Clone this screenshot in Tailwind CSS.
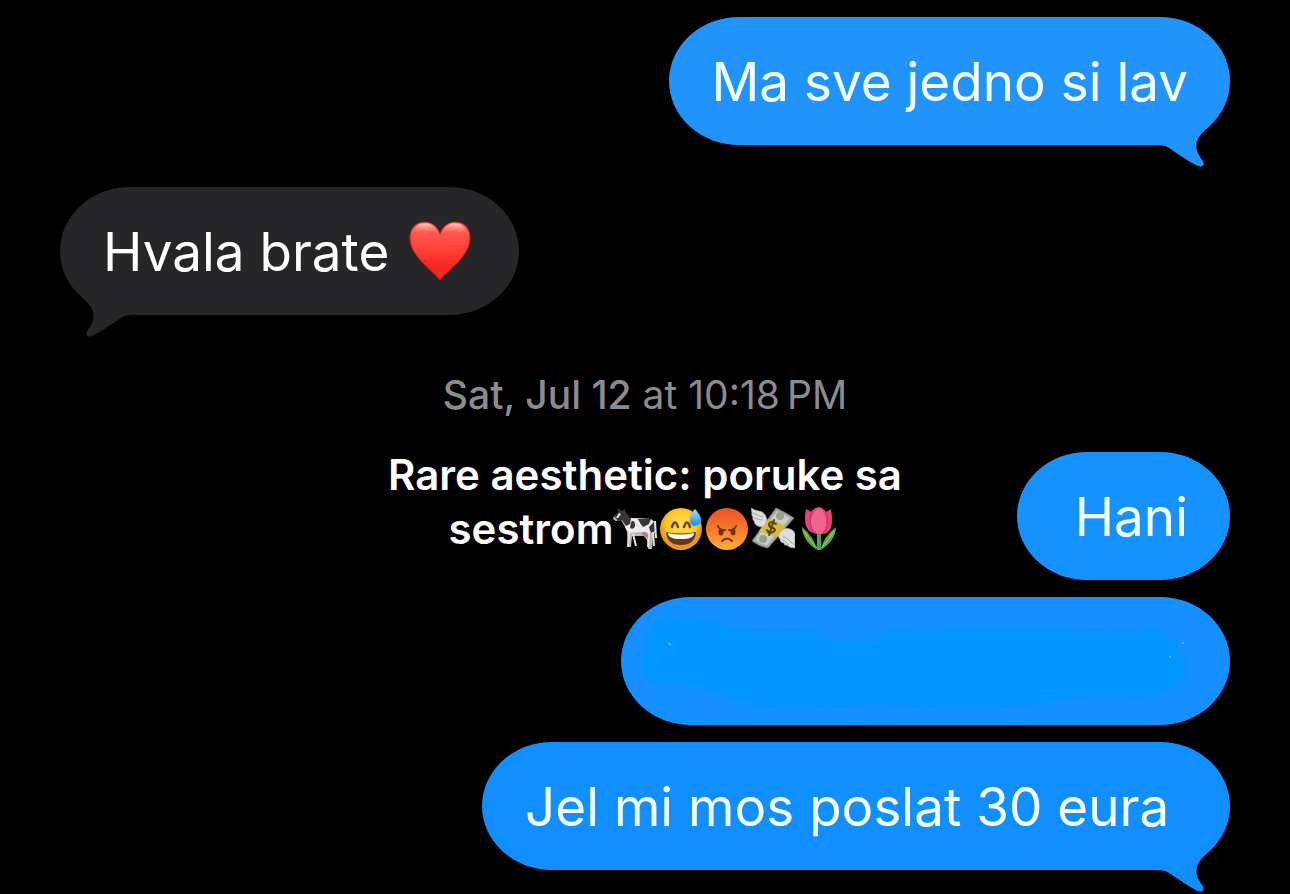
<!DOCTYPE html>
<html lang="hr">
<head>
<meta charset="utf-8">
<meta name="viewport" content="width=device-width, initial-scale=1">
<title>Poruke</title>
<script src="https://cdn.jsdelivr.net/npm/@tailwindcss/browser@4"></script>
</head>
<body class="bg-black font-[Inter,sans-serif] text-white">
<main class="flex min-h-screen flex-col overflow-hidden px-[60px] pt-[17px] pb-6">

  <div class="relative flex h-32 min-w-[558px] items-center self-end rounded-[70px/64px] bg-[#2094fa] px-[42px] pt-[3px] text-[53px] leading-none text-[#f4ffff]">
    <p class="whitespace-nowrap">Ma sve jedno si lav</p>
    <svg class="absolute right-0 -bottom-6 h-12 w-20" viewBox="0 0 80 48" aria-hidden="true"><path fill="#2094fa" d="M4 12V24C14 24 17 25 22 29C34 37 42 43 50 45.500C54 46 54.500 43 52.500 39.500C48 33 45 28 47 21C48 16 52 12 56 8L63 0H4Z"/></svg>
  </div>

  <div class="relative mt-[42px] flex h-32 min-w-[459px] items-center gap-5 self-start rounded-[70px/64px] bg-[#262628] pr-12 pl-[43px] text-[53px] leading-none">
    <p class="pt-[3px] whitespace-nowrap">Hvala brate</p>
    <svg class="h-[62px] w-[62px] shrink-0" viewBox="0 0 62 62" role="img" aria-label="❤️">
      <defs>
        <linearGradient id="heart" x1="0" y1="0" x2="0" y2="1"><stop offset="0" stop-color="#ff665e"/><stop offset=".35" stop-color="#ff4b43"/><stop offset=".75" stop-color="#f6291f"/><stop offset="1" stop-color="#e92a20"/></linearGradient>
        <linearGradient id="shine" x1="0" y1="0" x2="0" y2="1"><stop offset="0" stop-color="#ffd8d4"/><stop offset="1" stop-color="#ff665e" stop-opacity="0"/></linearGradient>
      </defs>
      <path fill="url(#heart)" stroke="#d61b18" d="M31 60C26 52 1 37 1 18C1 8 7 2 16 2C24 2 29 8 31 14C33 8 38 2 46 2C55 2 61 8 61 18C61 37 36 52 31 60Z"/>
      <path fill="url(#shine)" d="M4 15C5 7 10 3 16 3C23 3 27 8 29 14C24 10 10 10 4 15ZM33 14C35 8 39 3 46 3C52 3 57 7 58 15C52 10 38 10 33 14Z"/>
    </svg>
    <svg class="absolute -bottom-6 left-0 h-12 w-20 -scale-x-100" viewBox="0 0 80 48" aria-hidden="true"><path fill="#262628" d="M4 12V24C14 24 17 25 22 29C34 37 42 43 50 45.500C54 46 54.500 43 52.500 39.500C48 33 45 28 47 21C48 16 52 12 56 8L63 0H4Z"/></svg>
  </div>

  <p class="mt-[55px] text-center text-[39px] leading-[50px] whitespace-nowrap text-[#8b8b90]"><time datetime="22:18"><span class="font-medium">Sat, Jul 12</span> at 10:18&#8201;PM</time></p>

  <div class="mt-8 grid grid-cols-[1fr_auto_1fr] items-start">
    <div class="col-start-2 -mt-1 text-center text-[42px] leading-[54px] font-semibold whitespace-nowrap">
      <p>Rare aesthetic: poruke sa</p>
      <p class="flex h-[54px] items-center justify-center">sestrom<span class="flex gap-[2px]">
        <svg class="size-11" viewBox="0 0 44 44" role="img" aria-label="🐄">
          <path fill="#bdb9b8" d="M4 8L1 9L0 12L3 14L8 13L12 20L14 25L15 40H18L19 29L31 29L34 33L35 42H39L40 29L43 23L42 15L38 12L17 11L12 5Z"/>
          <path fill="#eeeae9" d="M12 9L17 11L38 12L40 15L37 27L26 25L16 26L12 20Z"/>
          <path fill="#373538" d="M1 9L5 5L4 1L9 4L12 2L13 6L18 11L17 17L13 19L9 13L5 14ZM18 15Q22 12 22 19Q21 23 17 21ZM25 12H38L36 17L30 20L27 16ZM36 20L41 15L42 24L38 26Z"/>
          <path stroke="#e5e1df" stroke-width="2" fill="none" d="M16 26L15 40M20 27L23 39M36 26L35 40M40 25L41 39M42 14L43 31"/>
          <path fill="#c97a79" d="M28 26Q32 23 35 27V31L31 29Z"/><path fill="#eee" d="M6 6L8 7L5 11H3Z"/>
        </svg>
        <svg class="size-11" viewBox="0 0 44 44" role="img" aria-label="😅">
          <defs><radialGradient id="smile" cy=".4"><stop stop-color="#ffe14c"/><stop offset=".7" stop-color="#fdc72f"/><stop offset="1" stop-color="#e99720"/></radialGradient><linearGradient id="drop" x1="0" y1="0" x2="0" y2="1"><stop stop-color="#a9e6ff"/><stop offset="1" stop-color="#168bda"/></linearGradient></defs>
          <circle cx="22" cy="22" r="21" fill="url(#smile)"/>
          <path fill="none" stroke="#754116" stroke-width="2.500" stroke-linecap="round" d="M13 20Q16 11 19 20M25 20Q28 11 31 20"/>
          <path fill="#6c351b" d="M7 25Q22 28 37 25Q36 38 22 38Q8 38 7 25Z"/><path fill="#fff" d="M9 26Q22 29 35 26Q35 32 22 32Q9 32 9 26Z"/>
          <path fill="url(#drop)" stroke="#51b4e7" stroke-width=".5" d="M36 2Q31 8 31 13Q31 19 36 19Q42 18 42 13Q42 9 36 2Z"/>
        </svg>
        <svg class="size-11" viewBox="0 0 44 44" role="img" aria-label="😡">
          <defs><linearGradient id="angry" x1="0" y1="0" x2="0" y2="1"><stop stop-color="#ee4f28"/><stop offset=".5" stop-color="#f97a28"/><stop offset="1" stop-color="#ffaf35"/></linearGradient></defs>
          <circle cx="22" cy="22" r="21" fill="url(#angry)"/>
          <path stroke="#71301c" stroke-width="2" fill="none" stroke-linecap="round" d="M13 19Q15 24 20 23M31 19Q29 24 24 23M17 34Q22 29 27 34"/>
          <ellipse cx="16" cy="25" rx="2.500" ry="3.500" fill="#71301c"/><ellipse cx="28" cy="25" rx="2.500" ry="3.500" fill="#71301c"/>
        </svg>
        <svg class="size-11" viewBox="0 0 44 44" role="img" aria-label="💸">
          <path fill="#a4aa9f" stroke="#6d776d" d="M1 34L25 1Q34 5 43 11L17 41Q9 40 1 34Z"/>
          <path fill="#cbd0c0" d="M4 33L26 4Q33 7 39 11L16 38Q9 37 4 33Z"/>
          <circle cx="29" cy="9" r="4" fill="#96a193"/><circle cx="12" cy="32" r="4" fill="#96a193"/>
          <path fill="#ddb842" d="M8 24L17 12Q26 13 34 20L26 30Q18 29 8 24Z"/>
          <path fill="none" stroke="#59461c" stroke-width="2" stroke-linecap="round" d="M25 17Q19 13 18 18Q18 20 22 21Q26 23 22 25Q18 27 16 23M23 13L18 28"/>
          <path fill="#dedddc" stroke="#aaa8a5" stroke-width=".7" d="M0 1Q5 4 8 4Q15 5 16 14L12 20Q4 20 3 14Q1 12 2 10Q0 8 1 6ZM31 23Q34 20 39 22Q43 23 44 27V41Q38 41 36 38Q33 39 33 36Q29 36 29 32Q25 29 31 23Z"/>
          <path fill="none" stroke="#aaa8a5" d="M2 6Q8 9 12 10M3 11Q8 13 12 13M32 29Q37 31 43 38M31 33Q35 34 38 38"/>
        </svg>
        <svg class="size-11" viewBox="0 0 44 44" role="img" aria-label="🌷">
          <path fill="#48a742" d="M20 24H24V43H20Z"/><path fill="#63a641" d="M20 43Q17 30 5 20Q5 33 20 43ZM24 43Q26 30 39 20Q39 33 24 43Z"/><path fill="none" stroke="#a3ce72" d="M7 24Q13 34 20 41M37 24Q31 34 24 41"/>
          <path fill="#e54278" d="M9 2Q13 4 14 5Q18 0 22 0Q27 1 29 5L34 2Q37 20 31 25Q27 28 22 27Q12 27 9 19Q7 10 9 2Z"/><path fill="#f0648f" d="M22 1Q11 10 15 21Q17 26 22 27Q29 25 29 15Q29 6 22 1Z"/><path fill="none" stroke="#c92e62" d="M14 5Q11 20 18 26M29 5Q34 20 26 26"/>
        </svg>
      </span></p>
    </div>
    <div class="flex h-32 min-w-[213px] items-center justify-end justify-self-end rounded-[70px/64px] bg-[#1692ff] px-[42px] pt-[3px] text-[53px] leading-none text-[#f4ffff]"><p>Hani</p></div>
  </div>

  <div class="mt-[17px] h-32 w-[609px] max-w-full self-end overflow-hidden rounded-[70px/64px] bg-[#1690ff]">
    <svg class="h-full w-full" viewBox="0 0 609 128" preserveAspectRatio="none" aria-hidden="true">
      <path class="blur-[3px]" fill="#0095ff" d="M23 50Q24 20 68 20Q88 19 108 31Q151 36 190 32Q210 53 270 40Q250 32 300 31L520 34Q541 22 547 40Q568 54 565 79Q547 103 508 100Q454 97 420 107Q340 115 260 107Q145 116 111 103Q82 88 40 88Q13 83 23 50Z"/>
      <path fill="none" stroke="#a2ddff" d="M47 46L50 48M561 46H563M548 60H550"/>
    </svg>
  </div>

  <div class="relative mt-[17px] flex h-32 min-w-[748px] items-center self-end rounded-[70px/64px] bg-[#118fff] px-[43px] pt-[3px] text-[53px] leading-none text-[#f4ffff]">
    <p class="whitespace-nowrap">Jel mi mos poslat 30 eura</p>
    <svg class="absolute right-0 -bottom-6 h-12 w-20" viewBox="0 0 80 48" aria-hidden="true"><path fill="#118fff" d="M4 12V24C14 24 17 25 22 29C34 37 42 43 50 45.500C54 46 54.500 43 52.500 39.500C48 33 45 28 47 21C48 16 52 12 56 8L63 0H4Z"/></svg>
  </div>
</main>
</body>
</html>
